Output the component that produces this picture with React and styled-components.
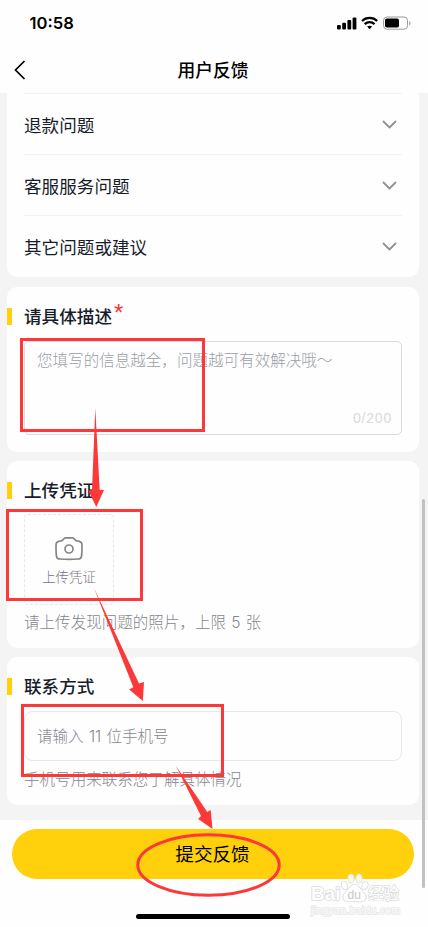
import React from "react";
import styled, { createGlobalStyle } from "styled-components";

const Global = createGlobalStyle`
  * { box-sizing: border-box; }
  body { margin: 0; background: #f4f4f4; }
`;

const Screen = styled.div`
  position: relative;
  width: 428px;
  height: 927px;
  overflow: hidden;
  display: flex;
  flex-direction: column;
  background: #f4f4f4;
  font-family: "Noto Sans CJK SC", sans-serif;
  color: #171c2b;
`;

const StatusBar = styled.div`
  height: 46px;
  flex: none;
  display: flex;
  align-items: center;
  justify-content: space-between;
  padding: 0 17px 0 29.5px;
  background: #fefefe;
`;

const Clock = styled.span`
  font: 600 16.6px/20px Inter, sans-serif;
  color: #000;
`;

const StatusIcons = styled.div`
  display: flex;
  align-items: center;
  height: 14px;
`;

const NavBar = styled.div`
  height: 47px;
  flex: none;
  display: grid;
  grid-template-columns: 60px 1fr 62px;
  align-items: center;
  background: #fefefe;
`;

const BackButton = styled.button`
  border: 0;
  background: none;
  padding: 0 0 0 14px;
  height: 20px;
  display: flex;
`;

const Title = styled.h1`
  margin: 0;
  padding-bottom: 1px;
  text-align: center;
  font-size: 17.8px;
  line-height: 24px;
  font-weight: 500;
  color: #000;
`;

const Content = styled.main`
  height: 727px;
  flex: none;
  padding: 0 9px 0 7px;
  display: flex;
  flex-direction: column;
`;

const Card = styled.section`
  flex: none;
  height: ${(p) => p.$height}px;
  margin-bottom: ${(p) => p.$gap}px;
  padding: ${(p) => (p.$list ? "0 17px" : "17px 17px 0 0")};
  border-radius: ${(p) => (p.$list ? "0 0 10px 10px" : "10px")};
  background: #fefefe;
`;

const Row = styled.div`
  height: 61px;
  display: flex;
  align-items: center;
  justify-content: space-between;
  padding: 1px 5px 0 0;
  border-top: 1px solid #f3f3f4;
  font-size: 17.6px;
  line-height: 24px;
`;

const Heading = styled.h2`
  margin: 0;
  height: 24px;
  display: flex;
  align-items: center;
  font-size: 17.6px;
  line-height: 24px;
  font-weight: 500;
  &::before {
    content: "";
    width: 5px;
    height: 17px;
    margin: 1px 12px 0 0;
    background: #ffd00b;
  }
`;

const Required = styled.span`
  height: 37px;
  margin-left: 2px;
  font: 400 24px/30px "Liberation Sans", sans-serif;
  color: #fb303c;
`;

const TextArea = styled.div`
  height: 94px;
  margin: 13px 0 0 17px;
  padding: 6px 9px 6px 12px;
  border: 1px solid #d9dadf;
  border-radius: 5px;
  display: flex;
  flex-direction: column;
  justify-content: space-between;
`;

const Placeholder = styled.span`
  font-size: 15.55px;
  line-height: 22px;
  font-weight: 300;
  white-space: nowrap;
  color: ${(p) => (p.$dark ? "#85868d" : "#9c9ea6")};
`;

const Counter = styled.span`
  align-self: flex-end;
  font: 400 14px/20px "Liberation Sans", sans-serif;
  letter-spacing: 0.8px;
  color: #d9dadd;
`;

const Upload = styled.div`
  width: 90px;
  height: 91px;
  margin: 12px 0 0 17px;
  display: flex;
  flex-direction: column;
  align-items: center;
  padding-top: 21px;
  border: 1px dashed #e7e7e8;
  border-radius: 4px;
`;

const UploadLabel = styled.span`
  margin-top: 5px;
  font-size: 13.4px;
  line-height: 20px;
  font-weight: 300;
  color: #75767d;
`;

const Hint = styled.p`
  margin: ${(p) => p.$top}px 0 0 17px;
  font-size: 15.55px;
  line-height: 22px;
  font-weight: 300;
  color: #85868d;
`;

const Digits = styled.span`
  font-family: Inter, sans-serif;
  margin: 0 0.9px;
`;

const PhoneInput = styled.div`
  height: 50px;
  margin: 13px 0 0 17px;
  padding: 0 12px;
  display: flex;
  align-items: center;
  border: 1px solid #e9e9eb;
  border-radius: 8px;
`;

const Footer = styled.footer`
  height: 107px;
  flex: none;
  display: flex;
  flex-direction: column;
  padding: 9px 14.5px 0 11.5px;
  background: #fefefe;
`;

const Submit = styled.button`
  height: 50px;
  border: 0;
  border-radius: 25px;
  padding: 0 0 2px;
  background: #ffd00b;
  font: 400 18.6px/48px "Noto Sans CJK SC", sans-serif;
  color: #000;
`;

const HomeIndicator = styled.div`
  width: 154px;
  height: 5px;
  margin: 35px 0 0 124.5px;
  border-radius: 3px;
  background: #000;
`;

const ScrollThumb = styled.div`
  position: absolute;
  left: 422px;
  top: 499px;
  width: 3px;
  height: 389px;
  border-radius: 1.5px;
  background: #c1c1c1;
`;

const Overlay = styled.svg`
  position: absolute;
  inset: 0;
  pointer-events: none;
`;

const Chevron = () => (
  <svg width="15" height="10" viewBox="0 0 15 10" fill="none">
    <path d="M1.5 1.5 7.5 7.5 13.5 1.5" stroke="#919298" strokeWidth="1.8" strokeLinecap="round" strokeLinejoin="round" />
  </svg>
);

const Camera = () => (
  <svg width="30" height="25" viewBox="0 0 30 25" fill="none" stroke="#858585" strokeWidth="1.7" strokeLinejoin="round">
    <path d="M11.4 1.8h7.2c1.9 0 2 2.9 4.3 3.1 3.5.2 5.1.9 5.1 4 0 4.5-.1 8.7-.5 11.4-.3 2-1.5 2.6-3.5 2.7-5.7.4-12.3.4-18 0-2-.1-3.2-.7-3.5-2.7C2.1 17.600 2 13.400 2 8.900c0-3.100 1.600-3.800 5.100-4 2.300-.2 2.400-3.100 4.300-3.100Z" />
    <circle cx="15" cy="13" r="4" />
  </svg>
);

const StatusGlyphs = () => (
  <svg width="76" height="14" viewBox="0 0 76 14">
    <rect x="2" y="9" width="3.8" height="4.5" rx="1" />
    <rect x="7.2" y="6.8" width="3.8" height="6.7" rx="1" />
    <rect x="12.4" y="4" width="3.8" height="9.5" rx="1" />
    <rect x="17.6" y="1.5" width="3.8" height="12" rx="1" />
    <g fill="none" stroke="#000" strokeWidth="2.3">
      <path d="M27 5c4.200-4.100 11-4.100 15.200 0" />
      <path d="M29.700 8.200c2.800-2.700 7-2.700 9.800 0" />
    </g>
    <path d="M32.100 10.600c1.400-1.200 3.600-1.200 5 0L34.600 13.300Z" />
    <rect x="48.5" y="1" width="24" height="12.2" rx="3.5" fill="none" stroke="#9b9b9b" />
    <rect x="50" y="2.6" width="14" height="9" rx="1.8" />
    <path d="M74.200 5v4.500c1.800-.8 1.800-3.700 0-4.500Z" fill="#9b9b9b" />
  </svg>
);

const Watermark = () => (
  <g fill="#fefefe" stroke="#dcdcdc" strokeWidth="1.6" paintOrder="stroke" strokeLinejoin="round">
    <g>
      <ellipse cx="344.500" cy="885.500" rx="2.600" ry="3.700" transform="rotate(-18 344.500 885.500)" />
      <ellipse cx="351" cy="878.500" rx="2.800" ry="4.200" fill="#fdf7df" />
      <ellipse cx="359" cy="878.500" rx="2.800" ry="4.200" fill="#fdf7df" />
      <ellipse cx="365" cy="885.500" rx="2.600" ry="3.700" transform="rotate(18 365 885.500)" />
      <path d="M354.500 884.500c-4 0-5 4-8 7-3 2.500-4 5.500-2.500 8 2 3.500 6.500 1.500 10.500 1.500s8.500 2 10.500-1.500c1.500-2.500.5-5.500-2.500-8-3-3-4-7-8-7Z" />
    </g>
    <text x="311" y="900" fontFamily="Liberation Sans, sans-serif" fontSize="18" fontWeight="700" textLength="29.5" lengthAdjust="spacingAndGlyphs">Bai</text>
    <text x="347.5" y="898.5" fontFamily="Liberation Sans, sans-serif" fontSize="12" stroke="none" fill="#c8c8c8">du</text>
    <text x="368" y="899" fontFamily="Noto Sans CJK SC, sans-serif" fontSize="15.5" fontWeight="500" strokeWidth="1.4">经验</text>
    <text x="311" y="914" fontFamily="Liberation Sans, sans-serif" fontSize="10.2" stroke="#e6e6e6" textLength="89">jingyan.baidu.com</text>
  </g>
);

const Annotations = () => (
  <Overlay width="428" height="927" viewBox="0 0 428 927">
    <Watermark />
    <g fill="none" stroke="#fd3838" strokeWidth="3">
      <rect x="21.5" y="339.5" width="182" height="91" />
      <rect x="7.5" y="510.5" width="134" height="89" />
      <rect x="22.5" y="705.5" width="200" height="70" />
      <ellipse cx="208.5" cy="865" rx="70.7" ry="30.2" />
    </g>
    <g fill="#fd3838">
      <path d="M95.300 408 99.700 490H104L96.300 507 88.300 490.500 92 490Z" />
      <path d="M94 588 139 683.600 144 682 142.800 701 129.200 689.500 133.300 687.200Z" />
      <path d="M176 766 207.300 812 210.700 810 212.500 829 198.200 819 201 816Z" />
    </g>
  </Overlay>
);

export default function App() {
  return (
    <Screen>
      <Global />
      <StatusBar>
        <Clock>10:58</Clock>
        <StatusIcons><StatusGlyphs /></StatusIcons>
      </StatusBar>
      <NavBar>
        <BackButton aria-label="返回">
          <svg width="12" height="20" viewBox="0 0 12 20" fill="none">
            <path d="M10.5 1 1.5 10l9 9" stroke="#000" strokeWidth="1.7" />
          </svg>
        </BackButton>
        <Title>用户反馈</Title>
      </NavBar>
      <Content>
        <Card $list $height={184} $gap={10}>
          {["退款问题", "客服服务问题", "其它问题或建议"].map((label) => (
            <Row key={label}>{label}<Chevron /></Row>
          ))}
        </Card>
        <Card $height={165} $gap={9}>
          <Heading>请具体描述<Required>*</Required></Heading>
          <TextArea>
            <Placeholder>您填写的信息越全，问题越可有效解决哦～</Placeholder>
            <Counter>0/200</Counter>
          </TextArea>
        </Card>
        <Card $height={187} $gap={9}>
          <Heading>上传凭证</Heading>
          <Upload>
            <Camera />
            <UploadLabel>上传凭证</UploadLabel>
          </Upload>
          <Hint $top={5}>请上传发现问题的照片，上限<Digits> 5 </Digits>张</Hint>
        </Card>
        <Card $height={148} $gap={0}>
          <Heading>联系方式</Heading>
          <PhoneInput><Placeholder $dark>请输入<Digits> 11 </Digits>位手机号</Placeholder></PhoneInput>
          <Hint $top={6}>手机号用来联系您了解具体情况</Hint>
        </Card>
      </Content>
      <Footer>
        <Submit>提交反馈</Submit>
        <HomeIndicator />
      </Footer>
      <ScrollThumb />
      <Annotations />
    </Screen>
  );
}
